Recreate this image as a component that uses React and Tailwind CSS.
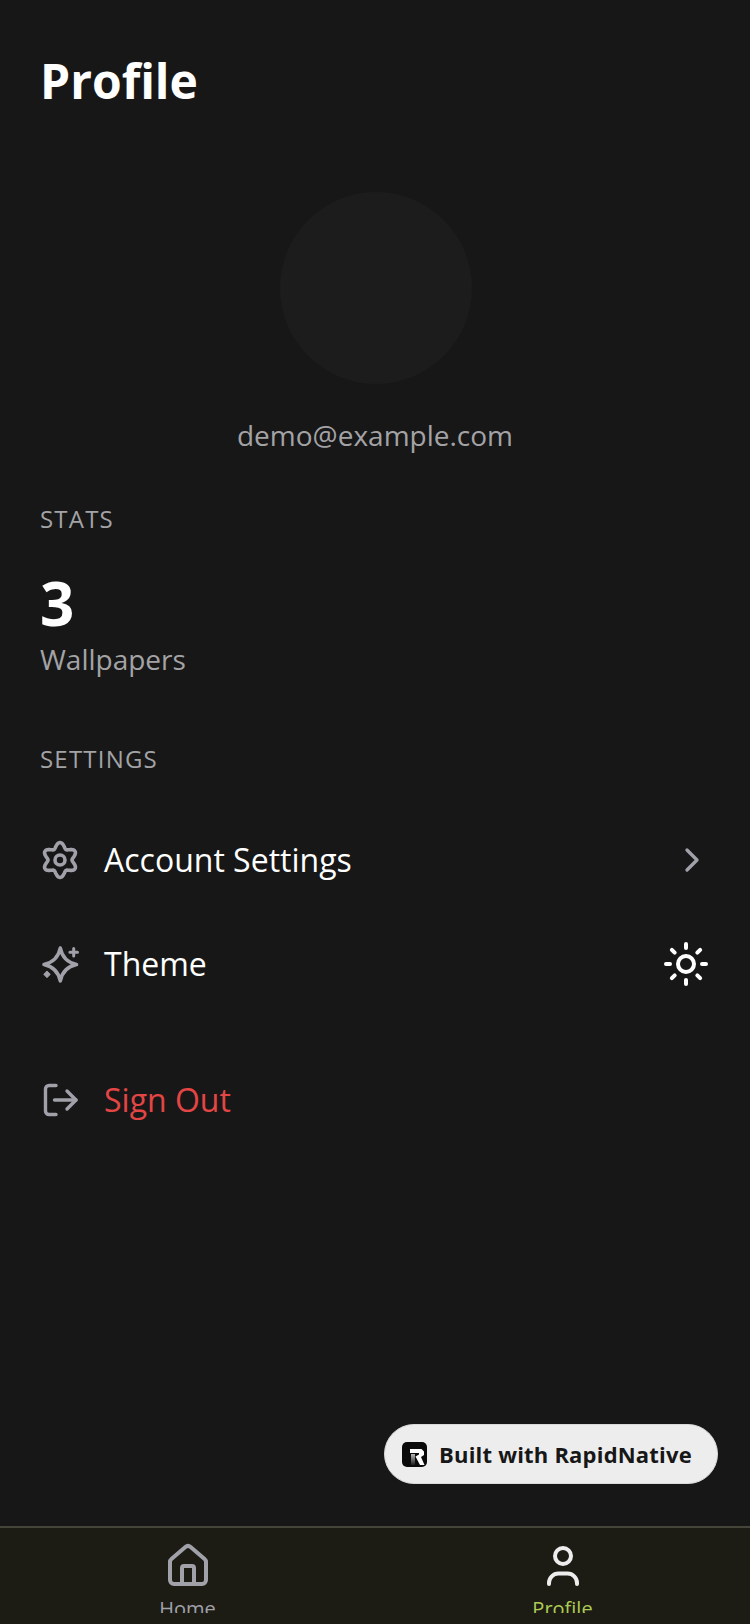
import React from 'react';
import { ChevronRight, Sun, House } from 'lucide-react';

// six lobed gear outline, radius swings between 12 and 17.4 around the centre
const gearPath = Array.from({ length: 120 }, (_, i) => {
  const angle = (i / 120) * Math.PI * 2;
  const r = 14.7 + 2.7 * Math.cos(6 * angle);
  const x = 20 + r * Math.sin(angle);
  const y = 20 - r * Math.cos(angle);
  return `${i === 0 ? 'M' : 'L'}${x.toFixed(2)} ${y.toFixed(2)}`;
}).join(' ') + 'Z';

function GearIcon() {
  return (
    <svg width="40" height="40" viewBox="0 0 40 40" fill="none" stroke="#a1a1aa" strokeWidth="3.6" strokeLinejoin="round">
      <path d={gearPath} />
      <circle cx="20" cy="20" r="5" />
    </svg>
  );
}

function SparkleIcon() {
  return (
    <svg width="40" height="40" viewBox="0 0 40 40" fill="none" stroke="#a1a1aa" strokeWidth="3.6" strokeLinecap="round" strokeLinejoin="round">
      <path d="M20.3 4C22 13 27.5 18.5 36.5 20.5C27.5 22.5 22 28 20.3 37C18.5 28 13 22.5 4 20.5C13 18.5 18.5 13 20.3 4Z" />
      <path d="M33.7 4.5v7.6M29.9 8.3h7.6" strokeWidth="3" />
      <path d="M7 27.3l3 3-3 3-3-3z" fill="#a1a1aa" strokeWidth="1.2" />
    </svg>
  );
}

function SignOutIcon() {
  return (
    <svg width="40" height="40" viewBox="0 0 40 40" fill="none" stroke="#a1a1aa" strokeWidth="3.4" strokeLinecap="round" strokeLinejoin="round">
      <path d="M16 5.5H9A3.5 3.5 0 0 0 5.5 9v22A3.5 3.5 0 0 0 9 34.5h7" />
      <path d="M14.5 20H36" />
      <path d="M27 11l9 9-9 9" />
    </svg>
  );
}

function RapidLogo() {
  return (
    <svg width="25" height="25" viewBox="0 0 25 25">
      <defs>
        <linearGradient id="rapidFade" x1="0" y1="0" x2="0" y2="1">
          <stop offset="0" stopColor="#bbbbbb" />
          <stop offset="1" stopColor="#1a1a1a" />
        </linearGradient>
      </defs>
      <rect width="25" height="25" rx="5" fill="#0a0a0a" />
      <path d="M9 12h4v11H9z" fill="url(#rapidFade)" />
      <path d="M8 7h11.5l2.5 2.5v3.5l-3 2 3.5 8h-4.5l-4.5-8.5 3.5-2V11H8z" fill="#ffffff" />
    </svg>
  );
}

function SectionLabel({ children }) {
  return <p className="text-[24px] leading-[32px] tracking-[1.2px] text-[#a3a3a6]">{children}</p>;
}

function SettingsRow({ icon, label, right, labelClass }) {
  return (
    <div className="flex items-center justify-between h-[104px]">
      <div className="flex items-center">
        <div className="w-[64px] flex items-center">{icon}</div>
        <span className={`text-[32px] leading-[44px] ${labelClass}`}>{label}</span>
      </div>
      {right}
    </div>
  );
}

function TabItem({ icon, label, labelClass }) {
  return (
    <div className="flex-1 flex flex-col items-center pt-[14px]">
      {icon}
      <div className="h-[18px] overflow-hidden mt-[5px]">
        <span className={`block text-[20px] leading-[28px] ${labelClass}`}>{label}</span>
      </div>
    </div>
  );
}

export default function App() {
  return (
    <div className="relative w-[750px] h-[1624px] overflow-hidden bg-[#171717] flex flex-col font-['Open_Sans',sans-serif]">
      <div className="flex-1 px-[40px]">
        <h1 className="mt-[49px] text-[48px] leading-[64px] font-bold text-white">Profile</h1>

        <div className="mt-[79px] flex flex-col items-center">
          <div className="ml-[2px] w-[192px] h-[192px] rounded-full bg-[#1c1c1c]"></div>
          <p className="mt-[31px] text-[28px] leading-[40px] text-[#a3a3a6]">demo@example.com</p>
        </div>

        <div className="mt-[48px]">
          <SectionLabel>STATS</SectionLabel>
          <p className="mt-[32px] text-[60px] leading-[72px] font-bold text-white">3</p>
          <p className="text-[28px] leading-[40px] text-[#a3a3a6]">Wallpapers</p>
        </div>

        <div className="mt-[64px]">
          <SectionLabel>SETTINGS</SectionLabel>
          <div className="mt-[33px]">
            <SettingsRow
              icon={<GearIcon />}
              label="Account Settings"
              labelClass="text-white"
              right={<ChevronRight size={40} strokeWidth={2} className="text-[#a1a1aa] -mr-[2px]" />}
            />
            <SettingsRow
              icon={<SparkleIcon />}
              label="Theme"
              labelClass="text-white"
              right={<Sun size={48} strokeWidth={2} className="text-white" />}
            />
          </div>
          <div className="mt-[32px]">
            <SettingsRow
              icon={<SignOutIcon />}
              label="Sign Out"
              labelClass="text-[#e44545]"
            />
          </div>
        </div>
      </div>

      <div className="absolute left-[384px] top-[1424px] w-[334px] h-[60px] rounded-full border border-[#d9d9d9] bg-[#ededed] flex items-center pl-[17px] gap-[12px]">
        <RapidLogo />
        <span className="-mt-[1px] text-[22px] leading-[30px] tracking-[0.2px] font-bold text-[#171717]">Built with RapidNative</span>
      </div>

      <div className="h-[98px] border-t-2 border-[#45453a] bg-[#1c1c14] flex">
        <TabItem
          icon={<House size={48} strokeWidth={2} className="text-[#a1a1aa]" />}
          label="Home"
          labelClass="text-[#a1a1aa]"
        />
        <TabItem
          icon={
            <svg width="48" height="48" viewBox="0 0 24 24" fill="none" stroke="#ededed" strokeWidth="2" strokeLinecap="round">
              <circle cx="12" cy="7" r="4" />
              <path d="M5 21v-.5a4.7 4.7 0 0 1 4.7-4.7h4.6a4.7 4.7 0 0 1 4.7 4.7v.5" />
            </svg>
          }
          label="Profile"
          labelClass="text-[#aecb55]"
        />
      </div>
    </div>
  );
}
